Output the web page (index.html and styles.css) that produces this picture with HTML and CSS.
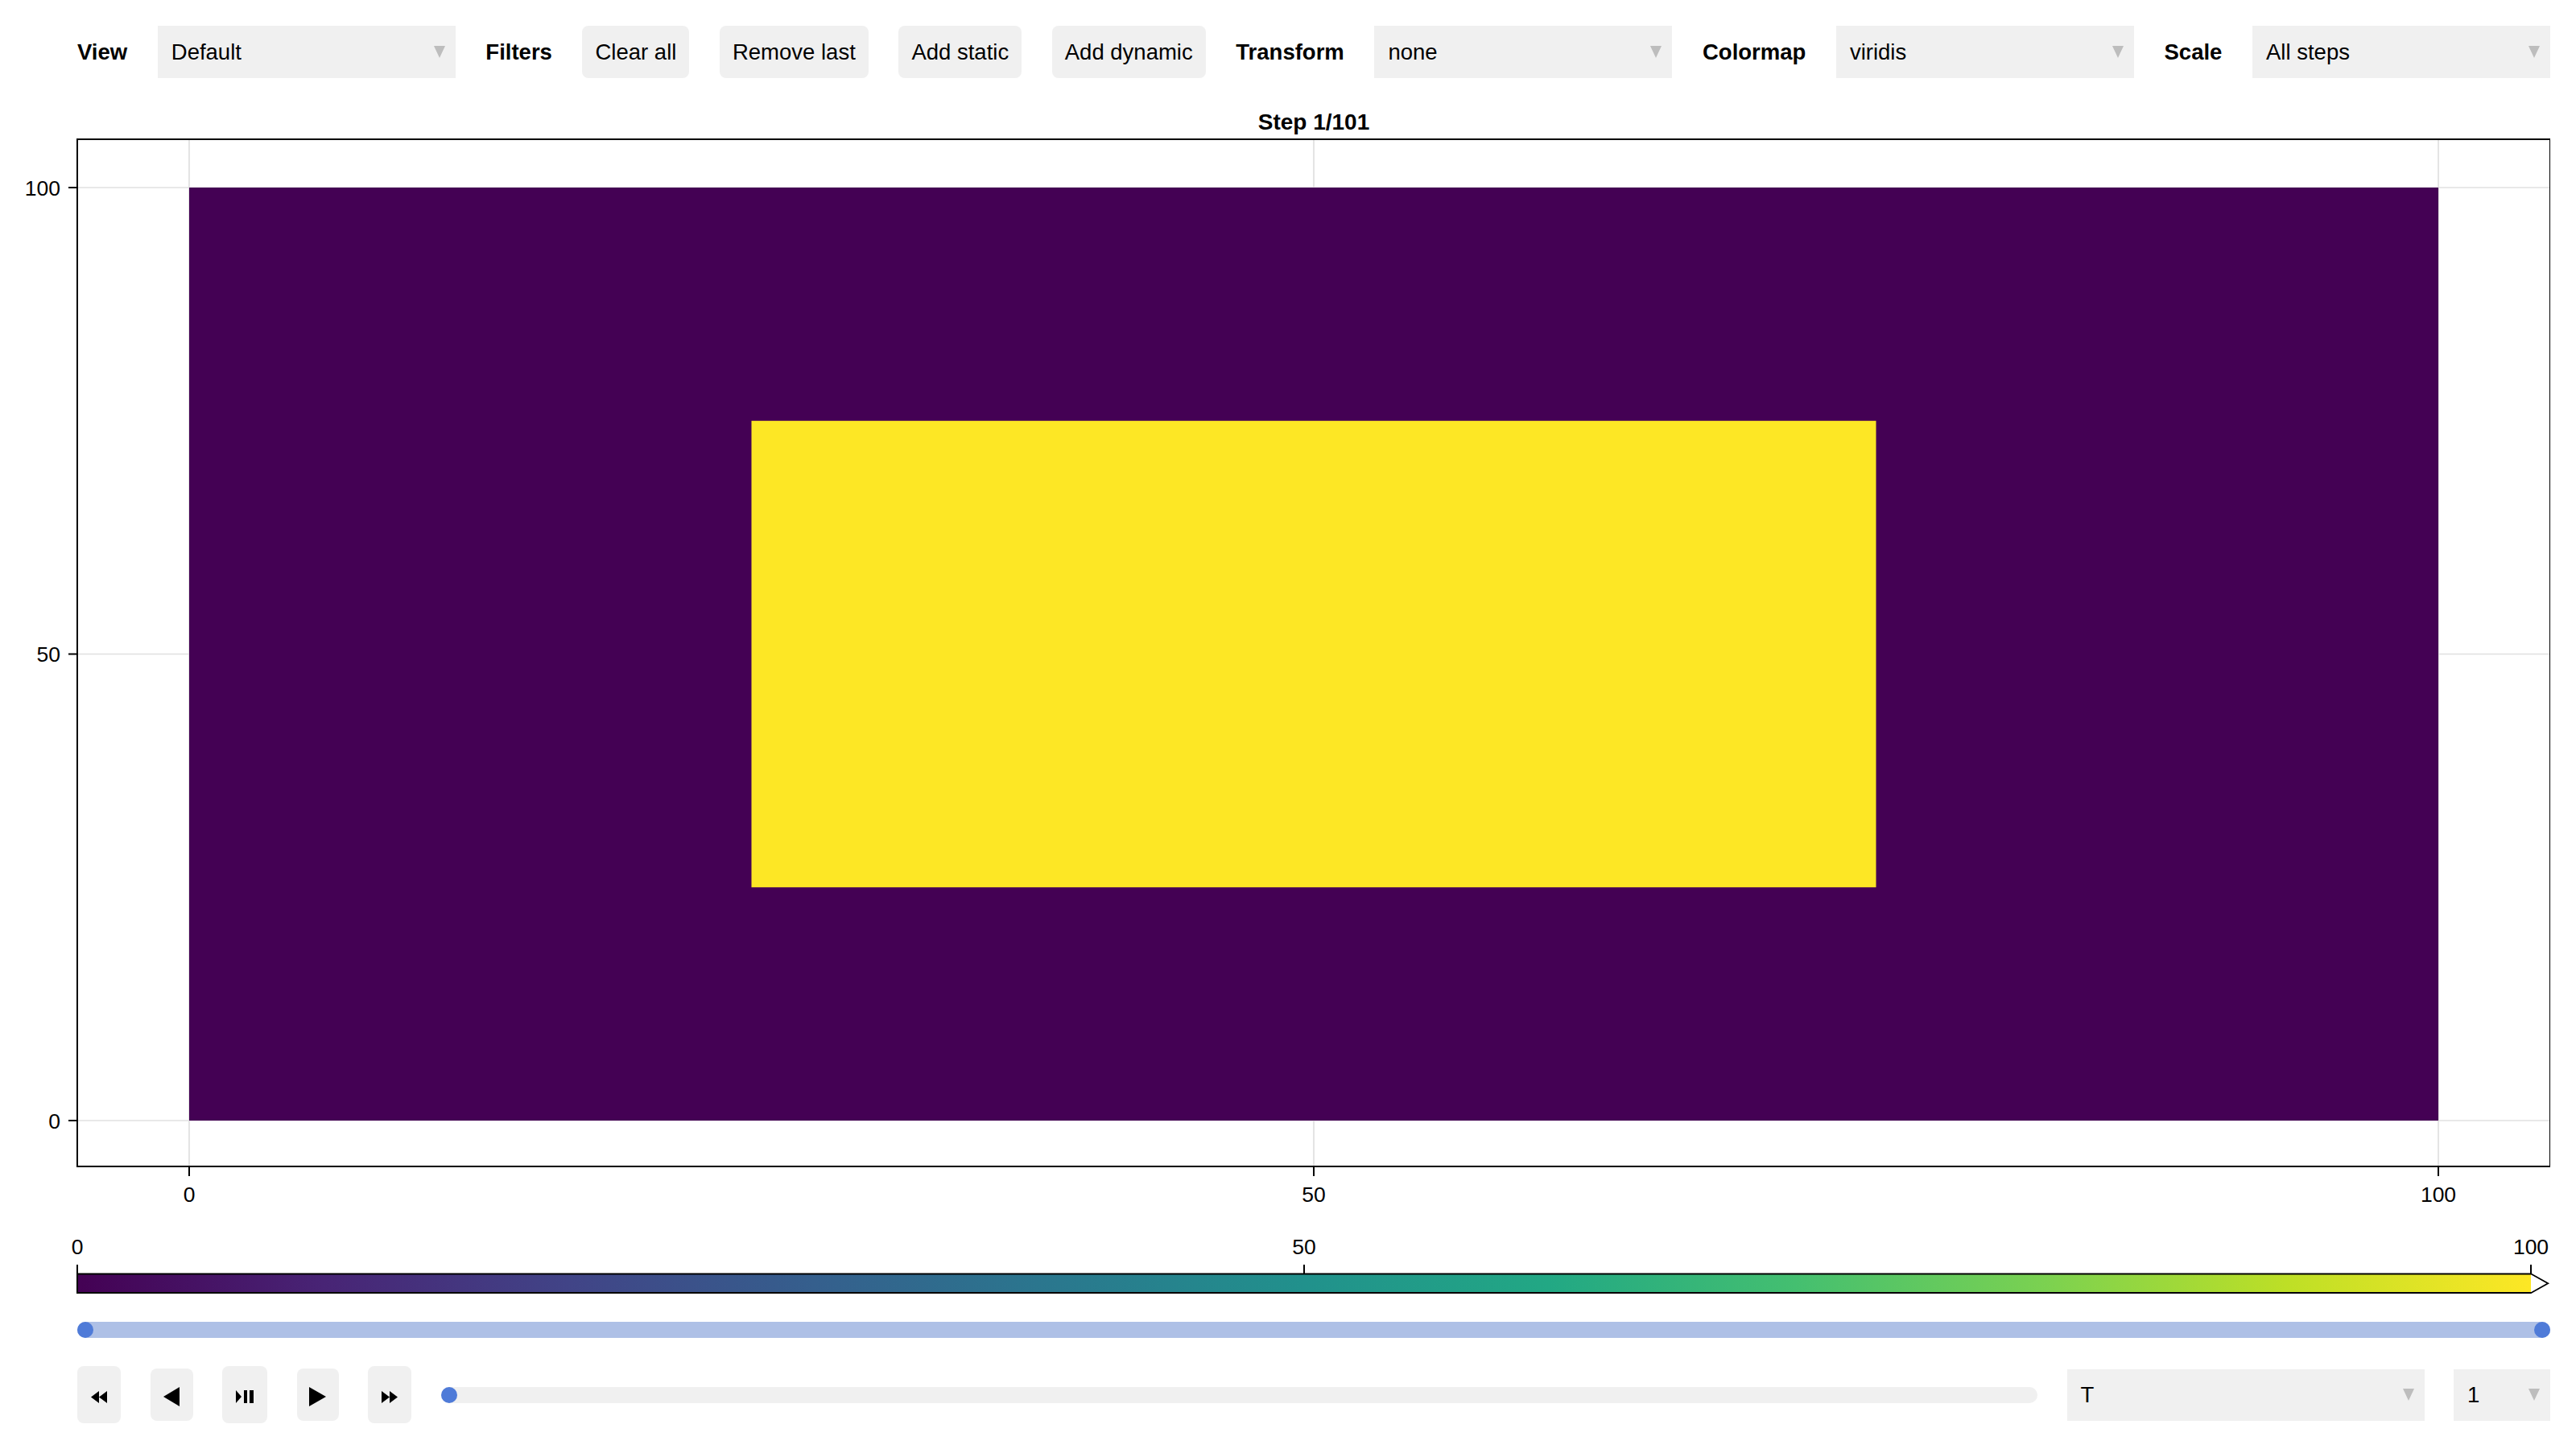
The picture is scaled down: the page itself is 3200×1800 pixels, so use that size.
FILE: index.html
```html
<html>
<head>
<title>Field viewer</title>
<meta charset="utf-8">
<meta name="viewport" content="width=device-width,initial-scale=1">
<link rel="stylesheet" href="styles.css">
</head>
<body>
<div class="page">

<div class="toolbar">
<span class="lbl">View</span>
<div class="menu"><span>Default</span><svg class="caret" viewBox="0 0 14 15"><path d="M0 0H14L7 15Z"/></svg></div>
<span class="lbl">Filters</span>
<div class="btn">Clear all</div>
<div class="btn">Remove last</div>
<div class="btn">Add static</div>
<div class="btn">Add dynamic</div>
<span class="lbl">Transform</span>
<div class="menu"><span>none</span><svg class="caret" viewBox="0 0 14 15"><path d="M0 0H14L7 15Z"/></svg></div>
<span class="lbl">Colormap</span>
<div class="menu"><span>viridis</span><svg class="caret" viewBox="0 0 14 15"><path d="M0 0H14L7 15Z"/></svg></div>
<span class="lbl">Scale</span>
<div class="menu"><span>All steps</span><svg class="caret" viewBox="0 0 14 15"><path d="M0 0H14L7 15Z"/></svg></div>
</div>

<!-- axis: x = page x - 32, y = page y - 97 -->
<svg class="axis" width="3136" height="1413" viewBox="0 0 3136 1413">
<text class="title" x="1600" y="64" text-anchor="middle">Step 1/101</text>
<g class="grid">
<line x1="203" y1="76" x2="203" y2="1352"/>
<line x1="1600" y1="76" x2="1600" y2="1352"/>
<line x1="2997" y1="76" x2="2997" y2="1352"/>
<line x1="64" y1="136" x2="3136" y2="136"/>
<line x1="64" y1="715.5" x2="3136" y2="715.5"/>
<line x1="64" y1="1295" x2="3136" y2="1295"/>
</g>
<rect x="203" y="136" width="2794" height="1159" fill="#440154"/>
<rect x="901.5" y="425.75" width="1397" height="579.5" fill="#fde725"/>
<rect class="frame" x="64" y="76" width="3072" height="1276"/>
<g class="ticks">
<line x1="53" y1="136" x2="64" y2="136"/>
<line x1="53" y1="715.5" x2="64" y2="715.5"/>
<line x1="53" y1="1295" x2="64" y2="1295"/>
<line x1="203" y1="1352" x2="203" y2="1364"/>
<line x1="1600" y1="1352" x2="1600" y2="1364"/>
<line x1="2997" y1="1352" x2="2997" y2="1364"/>
</g>
<g class="ticklbl" text-anchor="end">
<text x="43" y="146">100</text>
<text x="43" y="725">50</text>
<text x="43" y="1305">0</text>
</g>
<g class="ticklbl" text-anchor="middle">
<text x="203" y="1396">0</text>
<text x="1600" y="1396">50</text>
<text x="2997" y="1396">100</text>
</g>
</svg>

<!-- colorbar: x = page x - 32, y = page y - 1510 -->
<svg class="cbar" width="3136" height="105" viewBox="0 0 3136 105">
<defs>
<linearGradient id="viridis" x1="0" x2="1" y1="0" y2="0">
<stop offset="0" stop-color="#440154"/>
<stop offset="0.1" stop-color="#482475"/>
<stop offset="0.2" stop-color="#414487"/>
<stop offset="0.3" stop-color="#355f8d"/>
<stop offset="0.4" stop-color="#2a788e"/>
<stop offset="0.5" stop-color="#21918c"/>
<stop offset="0.6" stop-color="#22a884"/>
<stop offset="0.7" stop-color="#44bf70"/>
<stop offset="0.8" stop-color="#7ad151"/>
<stop offset="0.9" stop-color="#bddf26"/>
<stop offset="1" stop-color="#fde725"/>
</linearGradient>
</defs>
<g class="ticklbl" text-anchor="middle">
<text x="64" y="48">0</text>
<text x="1588" y="48">50</text>
<text x="3112" y="48">100</text>
</g>
<g class="ticks">
<line x1="64" y1="61" x2="64" y2="72"/>
<line x1="1588" y1="61" x2="1588" y2="72"/>
<line x1="3112" y1="61" x2="3112" y2="72"/>
</g>
<rect x="64" y="72.5" width="3048" height="23.5" fill="url(#viridis)"/>
<path class="frame" d="M64 72.5H3112L3133 84.25L3112 96H64Z"/>
<path d="M3112 73.5L3131 84.25L3112 95Z" fill="#fff"/>
</svg>

<div class="range">
<span class="knob"></span>
<span class="knob"></span>
</div>

<div class="player">
<div class="btn icon tall w54"><svg width="20" height="15" viewBox="0 0 20 15"><path d="M10 0L0 7.5L10 15ZM20 0L10 7.5L20 15Z"/></svg></div>
<div class="btn icon w53"><svg width="20" height="24" viewBox="0 0 20 24"><path d="M20 0L0 12L20 24Z"/></svg></div>
<div class="btn icon tall w56"><svg width="22" height="16" viewBox="0 0 22 16"><path d="M0 0L7 8L0 16Z"/><rect x="10" y="0" width="4" height="16"/><rect x="17" y="0" width="5" height="16"/></svg></div>
<div class="btn icon w52"><svg width="21" height="24" viewBox="0 0 21 24"><path d="M0 0L21 12L0 24Z"/></svg></div>
<div class="btn icon tall w54"><svg width="20" height="15" viewBox="0 0 20 15"><path d="M0 0L10 7.5L0 15ZM10 0L20 7.5L10 15Z"/></svg></div>
<div class="step"><span class="knob"></span></div>
<div class="menu wide"><span>T</span><svg class="caret" viewBox="0 0 14 15"><path d="M0 0H14L7 15Z"/></svg></div>
<div class="menu narrow"><span>1</span><svg class="caret" viewBox="0 0 14 15"><path d="M0 0H14L7 15Z"/></svg></div>
</div>

</div>
</body>
</html>
```

FILE: styles.css
```css
:root{--pane: #f0f0f0; --knob: #4f7bd8; --track: #aec0e6;}
body{margin: 0;background: #fff;color: #000;font-family: "Liberation Sans", Arial, sans-serif;}
.page{width: 3200px;height: 1800px;box-sizing: border-box;padding: 32px;display: flex;flex-direction: column;}

.toolbar{display: flex;align-items: center;justify-content: space-between;height: 65px;padding-left: 64px;font-size: 27.5px;}
.lbl{font-weight: bold;}
.menu{display: flex;align-items: center;justify-content: space-between;box-sizing: border-box;width: 370px;height: 65px;padding: 0 13px 0 17px;background: var(--pane);}
.caret{width: 14px;height: 15px;fill: #bdbdbd;}
.btn{display: flex;align-items: center;justify-content: center;box-sizing: border-box;height: 65px;padding: 0 16px;background: var(--pane);border-radius: 8px;}

.axis{display: block;}
.cbar{display: block;}
.title{font-size: 28px;font-weight: bold;}
.grid line{stroke: #e0e0e0;stroke-width: 1.7;}
.frame{fill: none;stroke: #000;stroke-width: 2;}
.ticks line{stroke: #000;stroke-width: 2;}
.ticklbl{font-size: 26.5px;}

.range{display: flex;justify-content: space-between;align-items: center;margin: 27px 0 0 64px;height: 20px;border-radius: 10px;background: var(--track);}
.knob{width: 20px;height: 20px;border-radius: 50%;background: var(--knob);}

.player{display: flex;align-items: center;gap: 36.5px;margin: 35px 0 0 64px;height: 71px;font-size: 27.5px;}
.icon{padding: 0;height: 65px;}
.icon svg{margin-top: 5px;fill: #000;}
.tall{height: 71px;}
.w52{width: 52px;}
.w53{width: 53px;}
.w54{width: 54px;}
.w56{width: 56px;}
.step{flex: 1;display: flex;align-items: center;height: 20px;border-radius: 10px;background: var(--pane);}
.player .menu{height: 64px;}
.wide{width: 444px;}
.narrow{width: 120px;}
```
